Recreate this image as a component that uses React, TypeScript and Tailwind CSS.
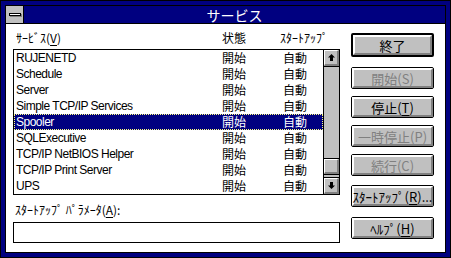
import React from "react";

const FONT = { fontFamily: '"Noto Sans CJK JP", "Liberation Sans", sans-serif' };
const LATIN = { fontFamily: '"Liberation Sans", sans-serif' };

type Service = { name: string; status: string; startup: string };

const services: Service[] = [
  { name: "RUJENETD", status: "開始", startup: "自動" },
  { name: "Schedule", status: "開始", startup: "自動" },
  { name: "Server", status: "開始", startup: "自動" },
  { name: "Simple TCP/IP Services", status: "開始", startup: "自動" },
  { name: "Spooler", status: "開始", startup: "自動" },
  { name: "SQLExecutive", status: "開始", startup: "自動" },
  { name: "TCP/IP NetBIOS Helper", status: "開始", startup: "自動" },
  { name: "TCP/IP Print Server", status: "開始", startup: "自動" },
  { name: "UPS", status: "開始", startup: "自動" },
];

const SELECTED = 4;

function Btn({
  label,
  hot,
  after,
  disabled,
  isDefault,
  className,
}: {
  label: string;
  hot?: string;
  after?: string;
  disabled?: boolean;
  isDefault?: boolean;
  className?: string;
}) {
  return (
    <div
      className={`rounded-[2px] border-black bg-[#c0c0c0] ${isDefault ? "border-2" : "border"} ${className ?? ""}`}
    >
      <div className="flex h-full items-center justify-center border-2 border-t-white border-l-white border-r-[#808080] border-b-[#808080]">
        <span
          className={`whitespace-nowrap text-[13px] leading-none ${disabled ? "text-[#808080]" : "text-black"}`}
        >
          {label}
          {hot ? (
            <>
              (<span className="underline underline-offset-2">{hot}</span>)
            </>
          ) : null}
          {after}
        </span>
      </div>
    </div>
  );
}

function ArrowBox({ up }: { up?: boolean }) {
  return (
    <div className={`h-[17px] w-full border-black bg-[#c0c0c0] ${up ? "border-b" : "border-t"}`}>
      <div className="flex h-full items-center justify-center border-t border-l border-r-2 border-b-2 border-t-white border-l-white border-r-[#808080] border-b-[#808080]">
        <svg width="7" height="7" viewBox="0 0 7 7">
          {up ? (
            <path d="M3.5 0 L7 3.5 H5 V7 H2 V3.5 H0 Z" fill="black" />
          ) : (
            <path d="M3.5 7 L7 3.5 H5 V0 H2 V3.5 H0 Z" fill="black" />
          )}
        </svg>
      </div>
    </div>
  );
}

export default function App() {
  return (
    <div
      className="h-[258px] w-[451px] border border-black bg-[#000080] p-[4px]"
      style={FONT}
    >
      <div className="flex h-full flex-col border border-black bg-white">
        {/* title bar */}
        <div className="flex h-[18px] shrink-0 border-b border-black bg-[#000080]">
          <div className="flex h-full w-[18px] items-center justify-center border-r border-black bg-[#c0c0c0]">
            <div className="h-[3px] w-[12px] border border-black bg-white shadow-[1px_1px_0_#808080]" />
          </div>
          <div className="flex flex-1 items-center justify-center text-[14px] leading-none text-white">
            サービス
          </div>
        </div>

        <div className="flex flex-1">
          {/* left column */}
          <div className="ml-[7px] flex w-[327px] flex-col">
            <div className="flex h-[25px] items-center pt-[2px] pl-[3px] text-[12px] leading-none text-black">
              <span className="w-[206px]">
                ｻｰﾋﾞｽ(<span className="underline underline-offset-2">V</span>)
              </span>
              <span className="w-[58px]">状態</span>
              <span>ｽﾀｰﾄｱｯﾌﾟ</span>
            </div>

            <div className="flex h-[146px] border border-black">
              <div className="flex-1 text-[12px] leading-none">
                {services.map((s, i) => (
                  <div
                    key={s.name}
                    className={`flex h-[16px] items-center pl-[2px] ${
                      i === SELECTED
                        ? "bg-[#000080] text-white outline-1 -outline-offset-1 outline-dotted outline-[#ffff80]"
                        : "text-black"
                    }`}
                  >
                    <span
                      className="w-[206px] whitespace-nowrap text-[12px] tracking-[-0.5px]"
                      style={LATIN}
                    >
                      {s.name}
                    </span>
                    <span className="w-[61px]">{s.status}</span>
                    <span>{s.startup}</span>
                  </div>
                ))}
              </div>
              <div className="flex w-[16px] flex-col border-l border-black bg-[#c0c0c0]">
                <ArrowBox up />
                <div className="flex-1" />
                <div className="h-[17px] border-y border-black">
                  <div className="h-full border-t border-l border-r-2 border-b-2 border-t-white border-l-white border-r-[#808080] border-b-[#808080]" />
                </div>
                <div className="h-[2px]" />
                <ArrowBox />
              </div>
            </div>

            <div className="mt-[9px] pl-[2px] text-[12px] leading-none text-black">
              ｽﾀｰﾄｱｯﾌﾟ ﾊﾟﾗﾒｰﾀ(<span className="underline underline-offset-2">A</span>):
            </div>
            <div className="mt-[6px] h-[21px] border border-black bg-white" />
          </div>

          {/* buttons */}
          <div className="ml-[11px] flex w-[83px] flex-col pt-[9px]">
            <Btn label="終了" isDefault className="h-[24px]" />
            <Btn label="開始" hot="S" disabled className="mt-[10px] h-[22px]" />
            <Btn label="停止" hot="T" className="mt-[7px] h-[22px]" />
            <Btn label="一時停止" hot="P" disabled className="mt-[7px] h-[22px]" />
            <Btn label="続行" hot="C" disabled className="mt-[7px] h-[22px]" />
            <Btn label="ｽﾀｰﾄｱｯﾌﾟ" hot="R" after="..." className="mt-[9px] h-[22px]" />
            <Btn label="ﾍﾙﾌﾟ" hot="H" className="mt-[10px] h-[22px]" />
          </div>
        </div>
      </div>
    </div>
  );
}
